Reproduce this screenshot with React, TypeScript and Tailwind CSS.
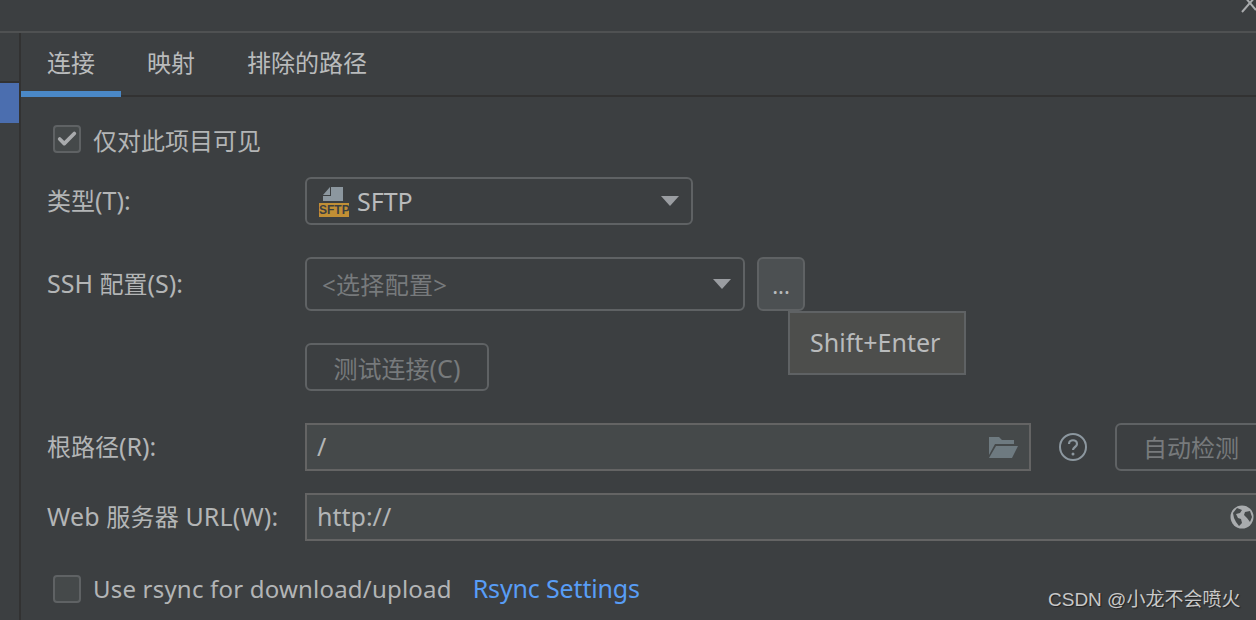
import { Check } from "lucide-react";
import React from "react";

const font = { fontFamily: '"Noto Sans", "Noto Sans CJK SC", sans-serif' };

const Zh = ({ children }: { children: React.ReactNode }) => <span className="text-[24px]">{children}</span>;

const Caret = () => (
  <svg width="18" height="10" viewBox="0 0 18 10" className="shrink-0">
    <path d="M0 0H18L9 10Z" fill="#9a9da1" />
  </svg>
);

const SftpIcon = () => (
  <div className="relative w-[30px] h-[30px] shrink-0 mt-[2px]">
    <svg width="30" height="30" viewBox="0 0 30 30" className="absolute left-0 top-0">
      <path d="M4 8L11 0V8ZM12 0H24V14H4V9H12Z" fill="#8c979f" />
      <rect x="0" y="16" width="30" height="14" fill="#c18f35" />
    </svg>
    <span className="absolute left-0 right-0 top-[16px] h-[14px] text-center text-[12px] leading-[14px] font-bold text-[#3c3f41] font-['Liberation_Sans',sans-serif]">
      SFTP
    </span>
  </div>
);

const FolderIcon = () => (
  <svg width="30" height="24" viewBox="0 0 30 24">
    <path d="M1 2H11L14 5H26V9H7L1 20Z" fill="#6e7a80" />
    <path d="M8 11H30L24 23H1Z" fill="#6e7a80" />
  </svg>
);

const HelpIcon = () => (
  <svg width="30" height="30" viewBox="0 0 30 30">
    <circle cx="15" cy="15" r="13" fill="none" stroke="#8c979f" strokeWidth="2" />
    <path d="M11 12c0-5 8-5 8 0 0 3-4 3-4 6" fill="none" stroke="#8c979f" strokeWidth="2.2" />
    <circle cx="15" cy="22" r="1.5" fill="#8c979f" />
  </svg>
);

const GlobeIcon = () => (
  <svg width="24" height="24" viewBox="0 0 24 24">
    <circle cx="12" cy="12" r="11.5" fill="#a9acae" />
    <path d="M7 3L12 5L10 8L6 9L8 13L11 14L12 18L9 21L6 17L4 13L3 8ZM15 7L20 6L22 12L20 17L17 13L14 10Z" fill="#45494a" />
  </svg>
);

const Label = ({ children }: { children: React.ReactNode }) => (
  <div className="w-[258px] shrink-0 text-[25px] text-[#b3b5b6] whitespace-nowrap">{children}</div>
);

export default function App() {
  return (
    <div className="w-[1256px] h-[620px] overflow-hidden bg-[#3c3f41] flex flex-col text-[#b3b5b6]" style={font}>
      {/* Title bar */}
      <div className="h-[33px] shrink-0 border-b-2 border-[#4f5152] relative">
        <svg width="20" height="14" viewBox="0 0 20 14" className="absolute right-0 top-0">
          <path d="M6 12L20 -4M8 -4L20 10" fill="none" stroke="#a9abad" strokeWidth="2" />
        </svg>
      </div>

      <div className="flex flex-1 min-h-0">
        {/* Sidebar strip */}
        <div className="w-[21px] shrink-0 border-r-2 border-[#323232]">
          <div className="mt-[48px] h-[42px] border-t-2 border-[#323232] bg-[#4b6eaf]" />
        </div>

        <div className="flex-1 min-w-0 flex flex-col">
          {/* Tabs */}
          <div className="h-[64px] shrink-0 flex border-b-2 border-[#323232] text-[24px] text-[#b9bbbc]">
            <div className="w-[100px] h-[64px] pl-[26px] pt-[12px] border-b-[6px] border-[#4a88c7] whitespace-nowrap">连接</div>
            <div className="pl-[26px] pt-[12px] whitespace-nowrap">映射</div>
            <div className="pl-[52px] pt-[12px] whitespace-nowrap">排除的路径</div>
          </div>

          <div className="flex flex-col pl-[26px]">
            {/* Visibility */}
            <div className="mt-[28px] ml-[6px] h-[28px] flex items-center">
              <div className="w-[28px] h-[28px] rounded-[4px] border-2 border-[#5f6264] bg-[#45494a] flex items-center justify-center">
                <Check size={22} strokeWidth={4} className="text-[#a9abad]" />
              </div>
              <span className="ml-[12px] pt-[4px] text-[24px] whitespace-nowrap">仅对此项目可见</span>
            </div>

            {/* Type */}
            <div className="mt-[24px] h-[48px] flex items-center">
              <Label><Zh>类型</Zh>(T):</Label>
              <div className="w-[388px] h-[48px] rounded-[6px] border-2 border-[#5f6264] flex items-center pl-[12px] pr-[12px]">
                <SftpIcon />
                <span className="ml-[8px] pt-[2px] flex-1 text-[25px] text-[#b9bbbc]">SFTP</span>
                <Caret />
              </div>
            </div>

            {/* SSH */}
            <div className="mt-[32px] h-[54px] flex items-center relative">
              <Label>SSH <Zh>配置</Zh>(S):</Label>
              <div className="w-[440px] h-[54px] rounded-[6px] border-2 border-[#5f6264] flex items-center pl-[15px] pr-[12px]">
                <span className="flex-1 pt-[2px] text-[24px] tracking-[0.3px] text-[#777a7c]">&lt;选择配置&gt;</span>
                <Caret />
              </div>
              <div className="ml-[12px] w-[48px] h-[54px] rounded-[6px] border-2 border-[#5f6264] bg-[#4c5052] text-center text-[22px] leading-[52px] text-[#b9bbbc]">
                ...
              </div>
              <div className="absolute left-[741px] top-[54px] z-10 w-[178px] h-[64px] border-2 border-[#5f6264] bg-[#4d4e4c] flex items-center pl-[20px] text-[25px] text-[#b9bbbc] whitespace-nowrap">
                Shift+Enter
              </div>
            </div>

            {/* Test connection */}
            <div className="mt-[32px] ml-[258px] w-[184px] h-[48px] rounded-[6px] border-2 border-[#5f6264] pt-[3px] flex items-center justify-center text-[25px] text-[#777a7c] whitespace-nowrap">
              <span><Zh>测试连接</Zh>(C)</span>
            </div>

            {/* Root path */}
            <div className="mt-[32px] h-[48px] flex items-center">
              <Label><Zh>根路径</Zh>(R):</Label>
              <div className="w-[726px] h-[48px] shrink-0 border-2 border-[#646464] bg-[#45494a] flex items-center pl-[10px] pr-[11px]">
                <span className="flex-1 text-[25px]">/</span>
                <FolderIcon />
              </div>
              <div className="ml-[27px] shrink-0 flex">
                <HelpIcon />
              </div>
              <div className="ml-[27px] w-[180px] h-[48px] shrink-0 rounded-[6px] border-2 border-[#5f6264] pl-[26px] pt-[2px] flex items-center text-[24px] text-[#777a7c] whitespace-nowrap">
                自动检测
              </div>
            </div>

            {/* Web URL */}
            <div className="mt-[22px] h-[48px] flex items-center">
              <Label><span className="tracking-[0.15px]">Web <Zh>服务器</Zh> URL(W):</span></Label>
              <div className="flex-1 h-[48px] border-2 border-[#646464] border-r-0 bg-[#45494a] flex items-center pl-[10px] pr-[2px]">
                <span className="flex-1 text-[25px]">http://</span>
                <GlobeIcon />
              </div>
            </div>

            {/* Rsync */}
            <div className="mt-[34px] ml-[6px] h-[28px] flex items-center relative">
              <div className="w-[28px] h-[28px] rounded-[4px] border-2 border-[#5f6264] bg-[#45494a]" />
              <span className="ml-[12px] text-[24px] tracking-[0.2px] whitespace-nowrap">Use rsync for download/upload</span>
              <span className="ml-[21px] text-[25px] tracking-[-0.15px] text-[#589df6] whitespace-nowrap">Rsync Settings</span>
              <span className="absolute left-[995px] top-[11px] text-[19px] text-[#c8c8c8] [text-shadow:1px_1px_1px_#222] whitespace-nowrap font-['Liberation_Sans','Noto_Sans_CJK_SC',sans-serif]">
                CSDN @小龙不会喷火
              </span>
            </div>
          </div>
        </div>
      </div>
    </div>
  );
}
